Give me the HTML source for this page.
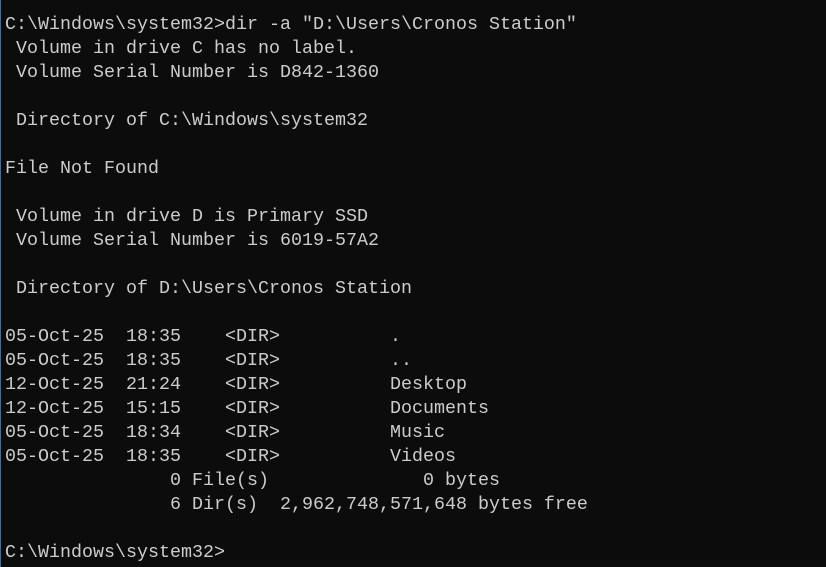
<!DOCTYPE html>
<html><head><style>
html,body{margin:0;padding:0;background:#0c0c0c;width:826px;height:567px;overflow:hidden}
body{border-left:1px solid #3a6fa8;box-sizing:border-box}
pre{margin:0;padding:13px 0 0 4px;font-family:"Liberation Mono",monospace;font-size:18.33px;line-height:24px;color:#cccccc;white-space:pre}
</style></head><body><pre>C:\Windows\system32&gt;dir -a "D:\Users\Cronos Station"
 Volume in drive C has no label.
 Volume Serial Number is D842-1360

 Directory of C:\Windows\system32

File Not Found

 Volume in drive D is Primary SSD
 Volume Serial Number is 6019-57A2

 Directory of D:\Users\Cronos Station

05-Oct-25  18:35    &lt;DIR&gt;          .
05-Oct-25  18:35    &lt;DIR&gt;          ..
12-Oct-25  21:24    &lt;DIR&gt;          Desktop
12-Oct-25  15:15    &lt;DIR&gt;          Documents
05-Oct-25  18:34    &lt;DIR&gt;          Music
05-Oct-25  18:35    &lt;DIR&gt;          Videos
               0 File(s)              0 bytes
               6 Dir(s)  2,962,748,571,648 bytes free

C:\Windows\system32&gt;</pre></body></html>
